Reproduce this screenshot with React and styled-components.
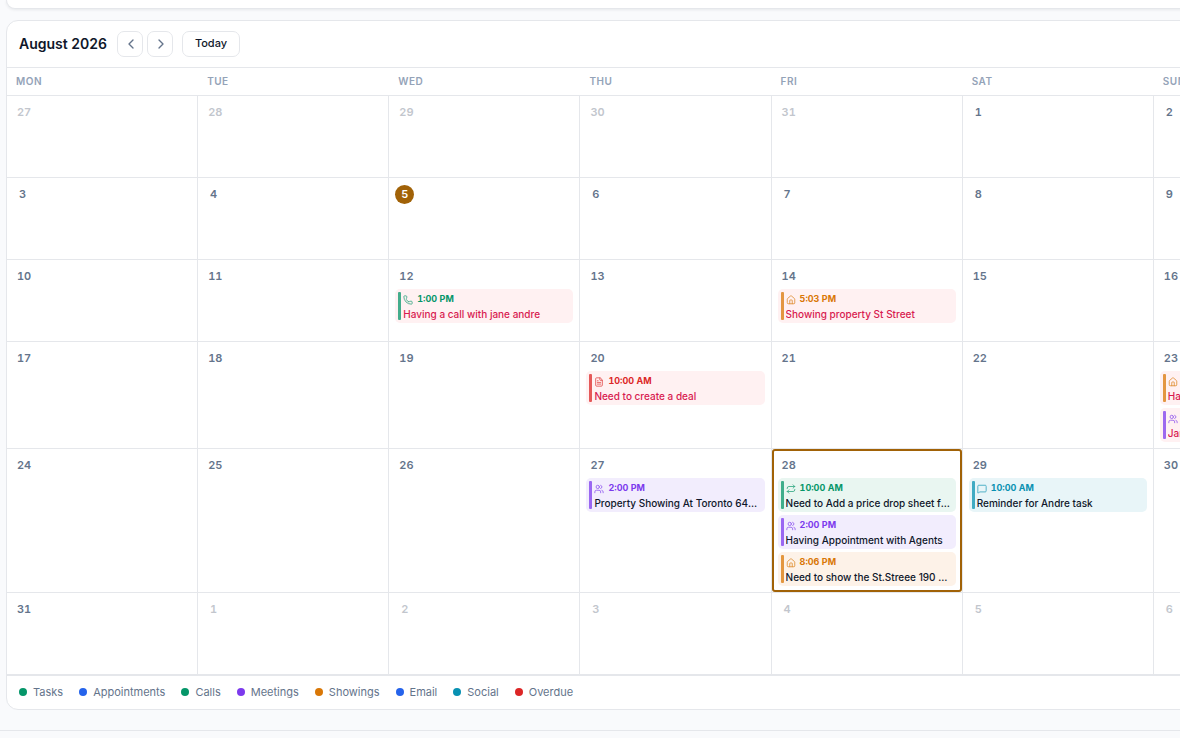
import React, { useState } from 'react';
import styled, { createGlobalStyle } from 'styled-components';
import {
  ChevronLeft,
  ChevronRight,
  FileText,
  House,
  MessageSquare,
  Phone,
  Repeat,
  Users
} from 'lucide-react';

const GlobalStyle = createGlobalStyle`
  * {
    box-sizing: border-box;
  }

  body {
    margin: 0;
    background: #f9fafc;
    color: #0f172a;
    font-family: Inter, "Liberation Sans", sans-serif;
    overflow: hidden;
  }

  button {
    font-family: inherit;
    cursor: pointer;
  }
`;

const line = '#e5e7eb';

const Page = styled.main`
  min-width: 1352px;
  padding: 0 6px;
`;

const SummaryCard = styled.div`
  height: 9px;
  background: #fff;
  border: 1px solid ${line};
  border-top: none;
  border-radius: 0 0 12px 12px;
  box-shadow: 0 1px 3px rgba(15, 23, 42, 0.08);
`;

const Calendar = styled.section`
  margin: 11px 0 20px;
  background: #fff;
  border: 1px solid ${line};
  border-radius: 12px;
  overflow: hidden;
`;

const Toolbar = styled.header`
  display: flex;
  align-items: center;
  padding: 10px 12px;
  border-bottom: 1px solid ${line};
`;

const Title = styled.h2`
  margin: 0 10px 0 0;
  font-size: 14px;
  font-weight: 600;
  line-height: 20px;
`;

const NavButtons = styled.div`
  display: flex;
  gap: 4px;
  margin-right: 9px;
`;

const ToolButton = styled.button`
  display: flex;
  align-items: center;
  justify-content: center;
  min-width: 26px;
  height: 26px;
  padding: ${props => (props.$wide ? '0 12px 2px' : '0 0 0 2px')};
  background: #fff;
  border: 1px solid ${line};
  border-radius: 7px;
  color: ${props => (props.$wide ? '#0f172a' : '#64748b')};
  font-size: 11px;
  font-weight: 500;
`;

const Week = styled.div`
  display: grid;
  grid-template-columns: repeat(7, minmax(0, 1fr));
`;

const Weekdays = styled(Week)`
  border-bottom: 1px solid ${line};
`;

const Weekday = styled.div`
  padding: 6px 9px;
  color: #94a3b8;
  font-size: 10px;
  font-weight: 600;
  line-height: 15px;
  letter-spacing: 0.5px;
`;

const Cell = styled.div`
  position: relative;
  min-height: 82px;
  padding: 7px 6px 6px;
  border-right: 1px solid ${line};
  border-bottom: 1px solid ${line};

  &:last-child {
    border-right: none;
  }

  &::after {
    content: '';
    display: ${props => (props.$selected ? 'block' : 'none')};
    position: absolute;
    inset: 0;
    border: 2px solid #a16207;
    border-radius: 3px;
    pointer-events: none;
  }
`;

const DayNumber = styled.span`
  display: inline-flex;
  align-items: center;
  justify-content: center;
  min-width: 19px;
  height: 19px;
  padding: 0 4px 1px;
  border-radius: 10px;
  background: ${props => (props.$today ? '#a16207' : 'transparent')};
  color: ${props =>
    props.$today ? '#fff' : props.$muted ? '#c2c6cd' : '#64748b'};
  font-size: 11px;
  font-weight: 600;
  font-variant-numeric: tabular-nums;
  vertical-align: top;
`;

const Events = styled.div`
  display: flex;
  flex-direction: column;
  gap: 3px;
  margin-top: 2px;
`;

const EventButton = styled.button`
  display: flex;
  gap: 2px;
  width: 100%;
  height: 34px;
  padding: 3px;
  border: none;
  border-radius: 5px;
  background: ${props => props.$bg};
  text-align: left;
`;

const Bar = styled.span`
  flex: none;
  align-self: stretch;
  width: 3px;
  border-radius: 1px;
  background: ${props => props.$color};
  opacity: 0.75;
`;

const EventBody = styled.span`
  flex: 1;
  min-width: 0;
`;

const EventTime = styled.span`
  display: flex;
  align-items: center;
  gap: 4px;
  color: ${props => props.$color};
  font-size: 9px;
  font-weight: 700;
  font-variant-numeric: tabular-nums;
  line-height: 13px;

  svg {
    flex: none;
    margin-top: 2px;
    opacity: 0.8;
  }
`;

const EventTitle = styled.span`
  display: block;
  margin-top: 2px;
  overflow: hidden;
  color: ${props => (props.$overdue ? '#d81b50' : '#0f172a')};
  font-size: 10px;
  font-weight: 500;
  line-height: 14px;
  text-overflow: ellipsis;
  white-space: nowrap;
`;

const Legend = styled.ul`
  display: flex;
  gap: 16px;
  margin: 0;
  padding: 8px 12px 9px;
  border-top: 1px solid ${line};
  list-style: none;
`;

const LegendItem = styled.li`
  display: flex;
  align-items: center;
  gap: 6px;
  color: #64748b;
  font-size: 11px;
  line-height: 16px;
`;

const Dot = styled.span`
  width: 8px;
  height: 8px;
  border-radius: 50%;
  background: ${props => props.$color};
`;

const Footer = styled.footer`
  height: 8px;
  margin: 0 -6px;
  border-top: 1px solid ${line};
`;

const kinds = {
  task: { color: '#059669', bg: '#e9f6f1', Icon: Repeat },
  call: { color: '#059669', bg: '#e9f6f1', Icon: Phone },
  meeting: { color: '#7c3aed', bg: '#f2edfd', Icon: Users },
  showing: { color: '#d97706', bg: '#fdf2e8', Icon: House },
  social: { color: '#0891b2', bg: '#e8f5f8', Icon: MessageSquare },
  deal: { color: '#dc2626', bg: '#fce9e9', Icon: FileText }
};

const events = {
  12: [
    { kind: 'call', time: '1:00 PM', title: 'Having a call with jane andre', overdue: true }
  ],
  14: [
    { kind: 'showing', time: '5:03 PM', title: 'Showing property St Street', overdue: true }
  ],
  20: [
    { kind: 'deal', time: '10:00 AM', title: 'Need to create a deal', overdue: true }
  ],
  23: [
    { kind: 'showing', time: '1:00 PM', title: 'Having a showing', overdue: true },
    { kind: 'meeting', time: '3:00 PM', title: 'Jane meeting', overdue: true }
  ],
  27: [
    { kind: 'meeting', time: '2:00 PM', title: 'Property Showing At Toronto 6480 Street' }
  ],
  28: [
    { kind: 'task', time: '10:00 AM', title: 'Need to Add a price drop sheet for client' },
    { kind: 'meeting', time: '2:00 PM', title: 'Having Appointment with Agents' },
    { kind: 'showing', time: '8:06 PM', title: 'Need to show the St.Streee 190 property' }
  ],
  29: [{ kind: 'social', time: '10:00 AM', title: 'Reminder for Andre task' }]
};

const legend = [
  ['Tasks', '#059669'],
  ['Appointments', '#2563eb'],
  ['Calls', '#059669'],
  ['Meetings', '#7c3aed'],
  ['Showings', '#d97706'],
  ['Email', '#2563eb'],
  ['Social', '#0891b2'],
  ['Overdue', '#dc2626']
];

const weekdays = ['MON', 'TUE', 'WED', 'THU', 'FRI', 'SAT', 'SUN'];
const today = 5;

// August 2026 starts on a Saturday, so the grid opens on July 27
const days = Array.from({ length: 42 }, (_, index) => {
  const date = new Date(2026, 6, 27 + index);
  return { day: date.getDate(), current: date.getMonth() === 7 };
});
const weeks = [0, 1, 2, 3, 4, 5].map(n => days.slice(n * 7, n * 7 + 7));

const Event = ({ event }) => {
  const { color, bg, Icon } = kinds[event.kind];

  return (
    <EventButton type="button" $bg={event.overdue ? '#fff1f2' : bg}>
      <Bar $color={color} />
      <EventBody>
        <EventTime $color={color}>
          <Icon size={10} />
          {event.time}
        </EventTime>
        <EventTitle $overdue={event.overdue}>{event.title}</EventTitle>
      </EventBody>
    </EventButton>
  );
};

const Day = ({ day, current, selected, onSelect }) => {
  const dayEvents = current ? events[day] : null;

  return (
    <Cell $selected={selected} onClick={onSelect}>
      <DayNumber $muted={!current} $today={current && day === today}>
        {day}
      </DayNumber>
      {dayEvents && (
        <Events>
          {dayEvents.map(event => (
            <Event key={event.title} event={event} />
          ))}
        </Events>
      )}
    </Cell>
  );
};

const App = () => {
  const [selected, setSelected] = useState(28);

  return (
    <>
      <GlobalStyle />
      <Page>
        <SummaryCard />
        <Calendar>
          <Toolbar>
            <Title>August 2026</Title>
            <NavButtons>
              <ToolButton type="button" aria-label="Previous month">
                <ChevronLeft size={16} />
              </ToolButton>
              <ToolButton type="button" aria-label="Next month">
                <ChevronRight size={16} />
              </ToolButton>
            </NavButtons>
            <ToolButton type="button" $wide onClick={() => setSelected(today)}>
              Today
            </ToolButton>
          </Toolbar>

          <Weekdays>
            {weekdays.map(name => (
              <Weekday key={name}>{name}</Weekday>
            ))}
          </Weekdays>

          {weeks.map((week, index) => (
            <Week key={index}>
              {week.map(({ day, current }) => (
                <Day
                  key={day}
                  day={day}
                  current={current}
                  selected={current && day === selected}
                  onSelect={() => current && setSelected(day)}
                />
              ))}
            </Week>
          ))}

          <Legend>
            {legend.map(([label, color]) => (
              <LegendItem key={label}>
                <Dot $color={color} />
                {label}
              </LegendItem>
            ))}
          </Legend>
        </Calendar>
        <Footer />
      </Page>
    </>
  );
};

export default App;
